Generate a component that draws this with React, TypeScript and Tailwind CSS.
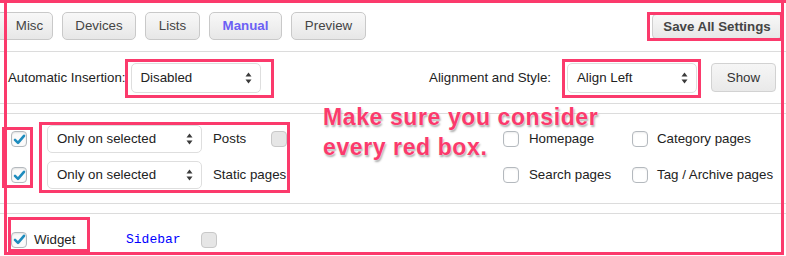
import React from 'react';

// up/down arrows used by the native-looking selects
function Arrows() {
  return (
    <svg width="7" height="12" viewBox="0 0 7 12" className="shrink-0">
      <path d="M3.5 0.5 L6.5 4.5 L0.5 4.5 Z" fill="#3a3a3a" />
      <path d="M3.5 11.5 L6.5 7.5 L0.5 7.5 Z" fill="#3a3a3a" />
    </svg>
  );
}

type BoxState = 'checked' | 'empty' | 'disabled';

function CheckBox({ state }: { state: BoxState }) {
  if (state === 'checked') {
    return (
      <span className="flex h-4 w-4 shrink-0 items-center justify-center rounded-[4px] border border-[#b4b9be] bg-[#fbfbfb] shadow-[inset_0_1px_2px_rgba(0,0,0,0.1)]">
        <svg width="13" height="13" viewBox="0 0 13 13">
          <path d="M2 6.8 L5 9.8 L11 2.8" fill="none" stroke="#1e8cbe" strokeWidth="2.6" strokeLinecap="round" strokeLinejoin="round" />
        </svg>
      </span>
    );
  }
  if (state === 'disabled') {
    return <span className="block h-4 w-4 shrink-0 rounded-[4px] border border-[#c8c8c8] bg-[#e6e6e6]" />;
  }
  return <span className="block h-4 w-4 shrink-0 rounded-[4px] border border-[#b4b9be] bg-white shadow-[inset_0_1px_2px_rgba(0,0,0,0.08)]" />;
}

function Tab({ label, active, className }: { label: string; active?: boolean; className: string }) {
  return (
    <div
      className={`flex h-[28px] shrink-0 items-center justify-center rounded-[5px] border border-[#c9c9c9] bg-linear-to-b from-[#f8f8f8] to-[#e7e7e7] text-[13.3px] ${
        active ? 'font-bold text-[#6b5ff5]' : 'text-[#444]'
      } ${className}`}
    >
      {label}
    </div>
  );
}

function Select({ value, className }: { value: string; className: string }) {
  return (
    <div className={`flex shrink-0 items-center justify-between rounded-[5px] border border-[#dedede] bg-white pl-[9px] pr-[8px] text-[13.3px] text-[#222] ${className}`}>
      <span>{value}</span>
      <Arrows />
    </div>
  );
}

export default function App() {
  const rows = [
    { label: 'Posts', box: true, a: 'Homepage', b: 'Category pages' },
    { label: 'Static pages', box: false, a: 'Search pages', b: 'Tag / Archive pages' },
  ];

  return (
    <div className="relative h-[256px] w-[786px] overflow-hidden bg-white font-['Liberation_Sans',Arial,sans-serif] text-[#222]">
      {/* tabs */}
      <div className="flex h-[52px] items-start border-b border-[#dcdcdc] pt-3">
        <div className="-ml-[4px] flex gap-[9px]">
          <Tab label="Misc" className="w-[57px] pl-[10px]" />
          <Tab label="Devices" className="w-[74px]" />
          <Tab label="Lists" className="w-[55px]" />
          <Tab label="Manual" active className="w-[73px]" />
          <Tab label="Preview" className="w-[75px]" />
        </div>
        <div className="mr-[4px] ml-auto mt-[2px] flex h-[25px] w-[130px] items-center justify-center rounded-[4px] border border-[#cfcfcf] bg-linear-to-b from-[#f8f8f8] to-[#e7e7e7] text-[13.3px] font-bold text-[#444]">
          Save All Settings
        </div>
      </div>

      {/* insertion / alignment */}
      <div className="flex h-[52px] items-center border-b border-[#dcdcdc]">
        <span className="pl-[8px] text-[13.3px]">Automatic Insertion:</span>
        <Select value="Disabled" className="ml-[5px] h-[30px] w-[130px]" />
        <span className="ml-auto text-[13.3px]">Alignment and Style:</span>
        <Select value="Align Left" className="ml-[16px] h-[30px] w-[130px]" />
        <div className="ml-[14px] mr-[10px] flex h-[29px] w-[65px] items-center justify-center rounded-[4px] border border-[#d2d2d2] bg-linear-to-b from-[#f6f6f6] to-[#e9e9e9] text-[13.3px] text-[#333]">
          Show
        </div>
      </div>
      <div className="h-[10px] border-b border-[#dcdcdc]" />

      {/* post types and page types */}
      <div className="flex h-[90px] flex-col gap-[8px] border-b border-[#dcdcdc] pt-[11px]">
        {rows.map((r) => (
          <div key={r.label} className="flex h-[28px] items-center text-[13.3px]">
            <span className="ml-[11px]">
              <CheckBox state="checked" />
            </span>
            <Select value="Only on selected" className="ml-[20px] h-[28px] w-[155px]" />
            <span className="ml-[11px] w-[58px] whitespace-nowrap">{r.label}</span>
            {r.box ? <CheckBox state="disabled" /> : <span className="w-4" />}
            <span className="ml-[216px]">
              <CheckBox state="empty" />
            </span>
            <span className="ml-[10px] w-[103px]">{r.a}</span>
            <CheckBox state="empty" />
            <span className="ml-[9px] whitespace-nowrap">{r.b}</span>
          </div>
        ))}
      </div>
      <div className="h-[10px] border-b border-[#dcdcdc]" />

      {/* widget */}
      <div className="flex items-center pt-[16px] text-[13.3px]">
        <span className="ml-[11px]">
          <CheckBox state="checked" />
        </span>
        <span className="ml-[7px] w-[92px]">Widget</span>
        <span className="w-[75px] font-['Liberation_Mono',monospace] text-[13px] text-[#0000ff]">Sidebar</span>
        <CheckBox state="disabled" />
      </div>

      {/* annotation overlay */}
      <div className="pointer-events-none absolute left-0 top-0 h-[3px] w-full bg-[#fb3a6c]" />
      <div className="pointer-events-none absolute left-[4px] top-0 h-[255px] w-[780px] border-[3px] border-[#fb3a6c]" />
      <div className="pointer-events-none absolute left-[647px] top-[12px] h-[29px] w-[136px] border-[3px] border-[#fb3a6c]" />
      <div className="pointer-events-none absolute left-[125px] top-[59px] h-[39px] w-[149px] border-[3px] border-[#fb3a6c]" />
      <div className="pointer-events-none absolute left-[562px] top-[59px] h-[39px] w-[139px] border-[3px] border-[#fb3a6c]" />
      <div className="pointer-events-none absolute left-[2px] top-[127px] h-[61px] w-[31px] border-[3px] border-[#fb3a6c]" />
      <div className="pointer-events-none absolute left-[39px] top-[122px] h-[71px] w-[251px] border-[3px] border-[#fb3a6c]" />
      <div className="pointer-events-none absolute left-[8px] top-[217px] h-[35px] w-[82px] border-[3px] border-[#fb3a6c]" />
      <div className="pointer-events-none absolute left-[323px] top-[102px] text-[23px] font-bold leading-[30px] tracking-[0.6px] text-[#fb3a6c] [text-shadow:0_0_2px_#fff,1px_2px_2px_rgba(0,0,0,0.35)]">
        Make sure you consider
        <br />
        every red box.
      </div>
    </div>
  );
}
